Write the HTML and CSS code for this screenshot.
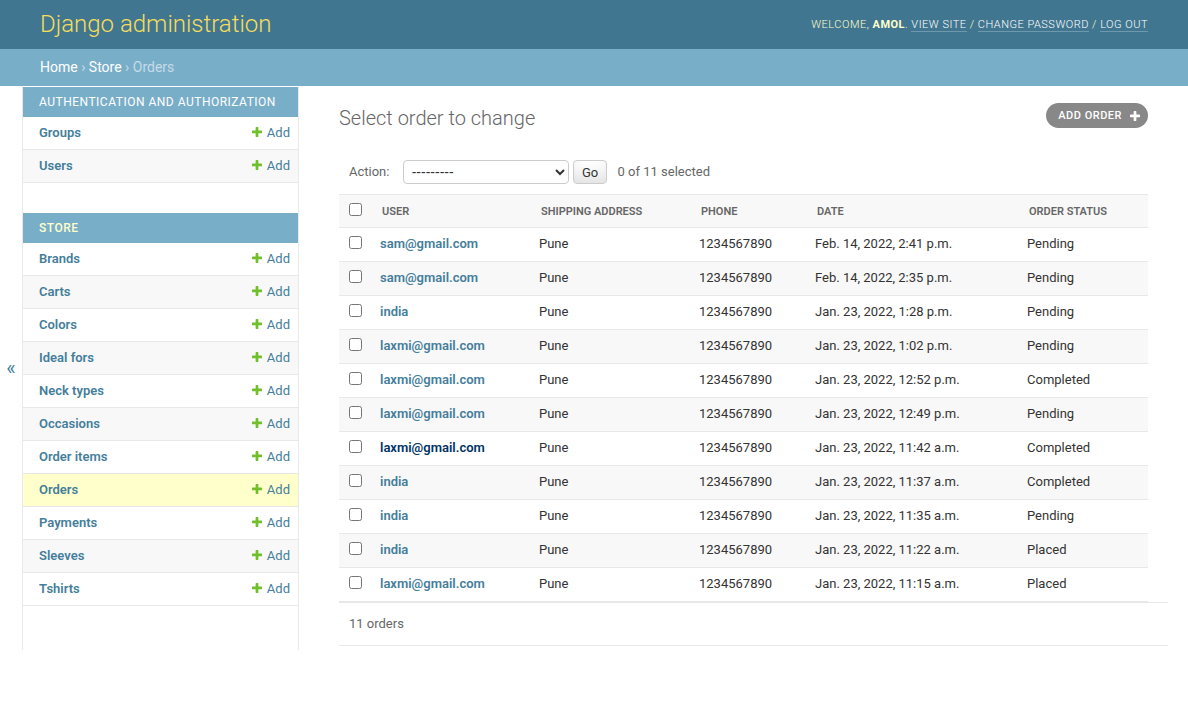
FILE: index.html
```html
<!DOCTYPE html>
<html lang="en">
<head>
<meta charset="utf-8">
<title>Select order to change | Django site admin</title>
<link rel="stylesheet" href="styles.css">
</head>
<body>
<div id="container">
  <div id="header">
    <div id="branding"><h1 id="site-name"><a href="#">Django administration</a></h1></div>
    <div id="user-tools">Welcome, <strong>amol</strong>. <a href="#">View site</a> / <a href="#">Change password</a> / <a href="#">Log out</a></div>
  </div>
  <div class="breadcrumbs"><a href="#">Home</a> › <a href="#">Store</a> › Orders</div>
  <div class="main">
    <button class="toggle-nav-sidebar" aria-label="Toggle navigation">«</button>
    <nav id="nav-sidebar">
      <div class="module">
        <table class="app-table">
          <caption><a href="#" class="section">Authentication and Authorization</a></caption>
          <tr><th><a href="#">Groups</a></th><td><a href="#" class="addlink"><svg class="plus" viewBox="192 192 1408 1408"><path d="M1600 796v192q0 40-28 68t-68 28h-416v416q0 40-28 68t-68 28h-192q-40 0-68-28t-28-68v-416h-416q-40 0-68-28t-28-68v-192q0-40 28-68t68-28h416v-416q0-40 28-68t68-28h192q40 0 68 28t28 68v416h416q40 0 68 28t28 68z"/></svg>Add</a></td></tr>
          <tr><th><a href="#">Users</a></th><td><a href="#" class="addlink"><svg class="plus" viewBox="192 192 1408 1408"><path d="M1600 796v192q0 40-28 68t-68 28h-416v416q0 40-28 68t-68 28h-192q-40 0-68-28t-28-68v-416h-416q-40 0-68-28t-28-68v-192q0-40 28-68t68-28h416v-416q0-40 28-68t68-28h192q40 0 68 28t28 68v416h416q40 0 68 28t28 68z"/></svg>Add</a></td></tr>
        </table>
      </div>
      <div class="module current-app">
        <table class="app-table">
          <caption><a href="#" class="section">Store</a></caption>
          <tr><th><a href="#">Brands</a></th><td><a href="#" class="addlink"><svg class="plus" viewBox="192 192 1408 1408"><path d="M1600 796v192q0 40-28 68t-68 28h-416v416q0 40-28 68t-68 28h-192q-40 0-68-28t-28-68v-416h-416q-40 0-68-28t-28-68v-192q0-40 28-68t68-28h416v-416q0-40 28-68t68-28h192q40 0 68 28t28 68v416h416q40 0 68 28t28 68z"/></svg>Add</a></td></tr>
          <tr><th><a href="#">Carts</a></th><td><a href="#" class="addlink"><svg class="plus" viewBox="192 192 1408 1408"><path d="M1600 796v192q0 40-28 68t-68 28h-416v416q0 40-28 68t-68 28h-192q-40 0-68-28t-28-68v-416h-416q-40 0-68-28t-28-68v-192q0-40 28-68t68-28h416v-416q0-40 28-68t68-28h192q40 0 68 28t28 68v416h416q40 0 68 28t28 68z"/></svg>Add</a></td></tr>
          <tr><th><a href="#">Colors</a></th><td><a href="#" class="addlink"><svg class="plus" viewBox="192 192 1408 1408"><path d="M1600 796v192q0 40-28 68t-68 28h-416v416q0 40-28 68t-68 28h-192q-40 0-68-28t-28-68v-416h-416q-40 0-68-28t-28-68v-192q0-40 28-68t68-28h416v-416q0-40 28-68t68-28h192q40 0 68 28t28 68v416h416q40 0 68 28t28 68z"/></svg>Add</a></td></tr>
          <tr><th><a href="#">Ideal fors</a></th><td><a href="#" class="addlink"><svg class="plus" viewBox="192 192 1408 1408"><path d="M1600 796v192q0 40-28 68t-68 28h-416v416q0 40-28 68t-68 28h-192q-40 0-68-28t-28-68v-416h-416q-40 0-68-28t-28-68v-192q0-40 28-68t68-28h416v-416q0-40 28-68t68-28h192q40 0 68 28t28 68v416h416q40 0 68 28t28 68z"/></svg>Add</a></td></tr>
          <tr><th><a href="#">Neck types</a></th><td><a href="#" class="addlink"><svg class="plus" viewBox="192 192 1408 1408"><path d="M1600 796v192q0 40-28 68t-68 28h-416v416q0 40-28 68t-68 28h-192q-40 0-68-28t-28-68v-416h-416q-40 0-68-28t-28-68v-192q0-40 28-68t68-28h416v-416q0-40 28-68t68-28h192q40 0 68 28t28 68v416h416q40 0 68 28t28 68z"/></svg>Add</a></td></tr>
          <tr><th><a href="#">Occasions</a></th><td><a href="#" class="addlink"><svg class="plus" viewBox="192 192 1408 1408"><path d="M1600 796v192q0 40-28 68t-68 28h-416v416q0 40-28 68t-68 28h-192q-40 0-68-28t-28-68v-416h-416q-40 0-68-28t-28-68v-192q0-40 28-68t68-28h416v-416q0-40 28-68t68-28h192q40 0 68 28t28 68v416h416q40 0 68 28t28 68z"/></svg>Add</a></td></tr>
          <tr><th><a href="#">Order items</a></th><td><a href="#" class="addlink"><svg class="plus" viewBox="192 192 1408 1408"><path d="M1600 796v192q0 40-28 68t-68 28h-416v416q0 40-28 68t-68 28h-192q-40 0-68-28t-28-68v-416h-416q-40 0-68-28t-28-68v-192q0-40 28-68t68-28h416v-416q0-40 28-68t68-28h192q40 0 68 28t28 68v416h416q40 0 68 28t28 68z"/></svg>Add</a></td></tr>
          <tr class="current-model"><th><a href="#">Orders</a></th><td><a href="#" class="addlink"><svg class="plus" viewBox="192 192 1408 1408"><path d="M1600 796v192q0 40-28 68t-68 28h-416v416q0 40-28 68t-68 28h-192q-40 0-68-28t-28-68v-416h-416q-40 0-68-28t-28-68v-192q0-40 28-68t68-28h416v-416q0-40 28-68t68-28h192q40 0 68 28t28 68v416h416q40 0 68 28t28 68z"/></svg>Add</a></td></tr>
          <tr><th><a href="#">Payments</a></th><td><a href="#" class="addlink"><svg class="plus" viewBox="192 192 1408 1408"><path d="M1600 796v192q0 40-28 68t-68 28h-416v416q0 40-28 68t-68 28h-192q-40 0-68-28t-28-68v-416h-416q-40 0-68-28t-28-68v-192q0-40 28-68t68-28h416v-416q0-40 28-68t68-28h192q40 0 68 28t28 68v416h416q40 0 68 28t28 68z"/></svg>Add</a></td></tr>
          <tr><th><a href="#">Sleeves</a></th><td><a href="#" class="addlink"><svg class="plus" viewBox="192 192 1408 1408"><path d="M1600 796v192q0 40-28 68t-68 28h-416v416q0 40-28 68t-68 28h-192q-40 0-68-28t-28-68v-416h-416q-40 0-68-28t-28-68v-192q0-40 28-68t68-28h416v-416q0-40 28-68t68-28h192q40 0 68 28t28 68v416h416q40 0 68 28t28 68z"/></svg>Add</a></td></tr>
          <tr><th><a href="#">Tshirts</a></th><td><a href="#" class="addlink"><svg class="plus" viewBox="192 192 1408 1408"><path d="M1600 796v192q0 40-28 68t-68 28h-416v416q0 40-28 68t-68 28h-192q-40 0-68-28t-28-68v-416h-416q-40 0-68-28t-28-68v-192q0-40 28-68t68-28h416v-416q0-40 28-68t68-28h192q40 0 68 28t28 68v416h416q40 0 68 28t28 68z"/></svg>Add</a></td></tr>
        </table>
      </div>
    </nav>
    <div class="content">
      <div class="page-head">
        <h1>Select order to change</h1>
        <a href="#" class="object-tool">Add order<svg class="plus-white" viewBox="192 192 1408 1408"><path d="M1600 796v192q0 40-28 68t-68 28h-416v416q0 40-28 68t-68 28h-192q-40 0-68-28t-28-68v-416h-416q-40 0-68-28t-28-68v-192q0-40 28-68t68-28h416v-416q0-40 28-68t68-28h192q40 0 68 28t28 68v416h416q40 0 68 28t28 68z"/></svg></a>
      </div>
      <div class="changelist">
        <div class="actions">
          <label>Action: <select class="action-select"><option>---------</option><option>Delete selected orders</option></select></label>
          <button type="button" class="go-button">Go</button>
          <span class="action-counter">0 of 11 selected</span>
        </div>
        <table class="result-list">
          <colgroup>
            <col class="c-check"><col class="c-user"><col class="c-ship"><col class="c-phone"><col class="c-date"><col class="c-status">
          </colgroup>
          <thead>
            <tr>
              <th class="check-col"><input type="checkbox"></th>
              <th>User</th>
              <th>Shipping address</th>
              <th>Phone</th>
              <th>Date</th>
              <th>Order status</th>
            </tr>
          </thead>
          <tbody>
            <tr><td class="check-col"><input type="checkbox"></td><th><a href="#">sam@gmail.com</a></th><td>Pune</td><td>1234567890</td><td>Feb. 14, 2022, 2:41 p.m.</td><td>Pending</td></tr>
            <tr><td class="check-col"><input type="checkbox"></td><th><a href="#">sam@gmail.com</a></th><td>Pune</td><td>1234567890</td><td>Feb. 14, 2022, 2:35 p.m.</td><td>Pending</td></tr>
            <tr><td class="check-col"><input type="checkbox"></td><th><a href="#">india</a></th><td>Pune</td><td>1234567890</td><td>Jan. 23, 2022, 1:28 p.m.</td><td>Pending</td></tr>
            <tr><td class="check-col"><input type="checkbox"></td><th><a href="#">laxmi@gmail.com</a></th><td>Pune</td><td>1234567890</td><td>Jan. 23, 2022, 1:02 p.m.</td><td>Pending</td></tr>
            <tr><td class="check-col"><input type="checkbox"></td><th><a href="#">laxmi@gmail.com</a></th><td>Pune</td><td>1234567890</td><td>Jan. 23, 2022, 12:52 p.m.</td><td>Completed</td></tr>
            <tr><td class="check-col"><input type="checkbox"></td><th><a href="#">laxmi@gmail.com</a></th><td>Pune</td><td>1234567890</td><td>Jan. 23, 2022, 12:49 p.m.</td><td>Pending</td></tr>
            <tr><td class="check-col"><input type="checkbox"></td><th><a href="#" class="hovered">laxmi@gmail.com</a></th><td>Pune</td><td>1234567890</td><td>Jan. 23, 2022, 11:42 a.m.</td><td>Completed</td></tr>
            <tr><td class="check-col"><input type="checkbox"></td><th><a href="#">india</a></th><td>Pune</td><td>1234567890</td><td>Jan. 23, 2022, 11:37 a.m.</td><td>Completed</td></tr>
            <tr><td class="check-col"><input type="checkbox"></td><th><a href="#">india</a></th><td>Pune</td><td>1234567890</td><td>Jan. 23, 2022, 11:35 a.m.</td><td>Pending</td></tr>
            <tr><td class="check-col"><input type="checkbox"></td><th><a href="#">india</a></th><td>Pune</td><td>1234567890</td><td>Jan. 23, 2022, 11:22 a.m.</td><td>Placed</td></tr>
            <tr><td class="check-col"><input type="checkbox"></td><th><a href="#">laxmi@gmail.com</a></th><td>Pune</td><td>1234567890</td><td>Jan. 23, 2022, 11:15 a.m.</td><td>Placed</td></tr>
          </tbody>
        </table>
        <p class="paginator">11 orders</p>
      </div>
    </div>
  </div>
</div>
</body>
</html>
```

FILE: styles.css
```css
html, body {
  margin: 0;
  padding: 0;
}

body {
  font-family: Roboto, "Lucida Grande", "DejaVu Sans", Verdana, Arial, sans-serif;
  font-size: 14px;
  color: #333;
  background: #fff;
}

a {
  color: #447e9b;
  text-decoration: none;
}

/* Header */
#header {
  display: flex;
  justify-content: space-between;
  align-items: center;
  padding: 10px 40px;
  background: #417690;
  color: #ffc;
}

#site-name {
  margin: 0 20px 0 0;
  padding: 0;
  font-size: 24px;
  line-height: 29px;
  font-weight: 300;
}

#site-name a {
  color: #f5dd5d;
}

#user-tools {
  font-size: 11px;
  font-weight: 300;
  letter-spacing: 0.5px;
  text-transform: uppercase;
  text-align: right;
}

#user-tools strong {
  font-weight: 700;
}

#user-tools a {
  color: #fff;
  border-bottom: 1px solid rgba(255, 255, 255, 0.25);
}

/* Breadcrumbs */
.breadcrumbs {
  background: #79aec8;
  padding: 10px 40px;
  color: #c4dce8;
  font-size: 14px;
  line-height: 17px;
}

.breadcrumbs a {
  color: #fff;
}

/* Main */
.main {
  display: flex;
  height: 564px;
}

.toggle-nav-sidebar {
  flex: 0 0 23px;
  width: 23px;
  border: 0;
  border-right: 1px solid #eaeaea;
  background: #fff;
  color: #447e9b;
  font-size: 20px;
  font-family: Roboto, sans-serif;
  padding: 0;
  cursor: pointer;
}

#nav-sidebar {
  flex: 0 0 275px;
  border-top: 1px solid transparent;
  border-right: 1px solid #eaeaea;
  background: #fff;
  overflow: hidden;
}

.module {
  margin-bottom: 30px;
  background: #fff;
}

.app-table {
  width: 100%;
  border-collapse: collapse;
}

.app-table caption {
  background: #79aec8;
  color: #fff;
  padding: 8px 8px 8px 16px;
  font-size: 12px;
  line-height: 14px;
  font-weight: 400;
  letter-spacing: 0.5px;
  text-transform: uppercase;
  text-align: left;
  white-space: nowrap;
}

.app-table caption a {
  color: #fff;
}

.current-app caption a {
  color: #ffc;
  font-weight: 500;
}

.app-table th,
.app-table td {
  font-size: 13px;
  line-height: 16px;
  padding: 8px;
  border-bottom: 1px solid #e8e8e8;
  vertical-align: top;
  text-align: left;
}

.app-table th {
  width: 100%;
  padding-left: 16px;
  font-weight: 600;
}

.app-table td {
  white-space: nowrap;
}

.app-table tr:nth-child(even) {
  background: #f8f8f8;
}

.app-table tr.current-model {
  background: #ffc;
}

.plus {
  width: 10px;
  height: 10px;
  margin-right: 5px;
  vertical-align: 0;
  fill: #70bf2b;
}

/* Content */
.content {
  flex: 1;
  min-width: 0;
  padding: 20px 40px;
}

.page-head {
  display: flex;
  justify-content: space-between;
  align-items: flex-start;
  margin-bottom: 20px;
}

.page-head h1 {
  margin: 0;
  font-size: 20px;
  line-height: 24px;
  font-weight: 300;
  color: #666;
}

.object-tool {
  margin-top: -3px;
  display: inline-flex;
  align-items: center;
  height: 25px;
  padding: 0 8px 0 12px;
  background: #888;
  color: #fff;
  font-size: 11px;
  font-weight: 500;
  text-transform: uppercase;
  letter-spacing: 0.5px;
  border-radius: 15px;
  box-sizing: border-box;
}

.plus-white {
  width: 10px;
  height: 10px;
  margin-left: 8px;
  fill: #fff;
}

/* Changelist */
.actions {
  padding: 10px;
  line-height: 24px;
  color: #666;
  font-size: 13px;
}

.actions label {
  font-size: 13px;
}

.action-select {
  vertical-align: top;
  width: 166px;
  height: 24px;
  margin: 0 0 0 10px;
  padding: 0 0 0 4px;
  color: #333;
  border: 1px solid #ccc;
  border-radius: 4px;
  font-size: 14px;
  background: #fff;
}

.go-button {
  vertical-align: top;
  height: 24px;
  margin: 0 0 0 1px;
  padding: 4px 8px;
  font-family: Roboto, sans-serif;
  font-size: 13px;
  line-height: 1;
  color: #333;
  background: #fff;
  border: 1px solid #ccc;
  border-radius: 4px;
  box-shadow: 0 -15px 20px -10px rgba(0, 0, 0, 0.15) inset;
}

.action-counter {
  margin: 0 0.5em 0 0.55em;
}

.result-list {
  width: 100%;
  border-collapse: collapse;
  table-layout: fixed;
}

.c-check { width: 33px; }
.c-user { width: 159px; }
.c-ship { width: 160px; }
.c-phone { width: 116px; }
.c-date { width: 212px; }
.c-status { width: 129px; }

.result-list thead th {
  background: #f8f8f8;
  color: #666;
  font-size: 11px;
  font-weight: 600;
  text-transform: uppercase;
  text-align: left;
  line-height: 16px;
  padding: 8px 10px 6px;
  border-top: 1px solid #e8e8e8;
  border-bottom: 1px solid #e8e8e8;
  white-space: nowrap;
  vertical-align: middle;
}

.result-list tbody td,
.result-list tbody th {
  font-size: 13px;
  line-height: 16px;
  padding: 8px;
  text-align: left;
  vertical-align: top;
  border-bottom: 1px solid #e8e8e8;
}

.result-list tbody th {
  font-weight: 600;
}

.result-list tbody tr:nth-child(even) {
  background: #f8f8f8;
}

.result-list .check-col {
  text-align: center;
  padding-left: 0;
  padding-right: 0;
}

.result-list input[type="checkbox"] {
  margin: 0;
  vertical-align: baseline;
}

.result-list a.hovered {
  color: #036;
}

.paginator {
  margin: 0;
  width: calc(100% + 20px);
  box-sizing: border-box;
  padding: 10px;
  font-size: 13px;
  line-height: 22px;
  color: #666;
  border-top: 1px solid #e8e8e8;
  border-bottom: 1px solid #e8e8e8;
}
```
